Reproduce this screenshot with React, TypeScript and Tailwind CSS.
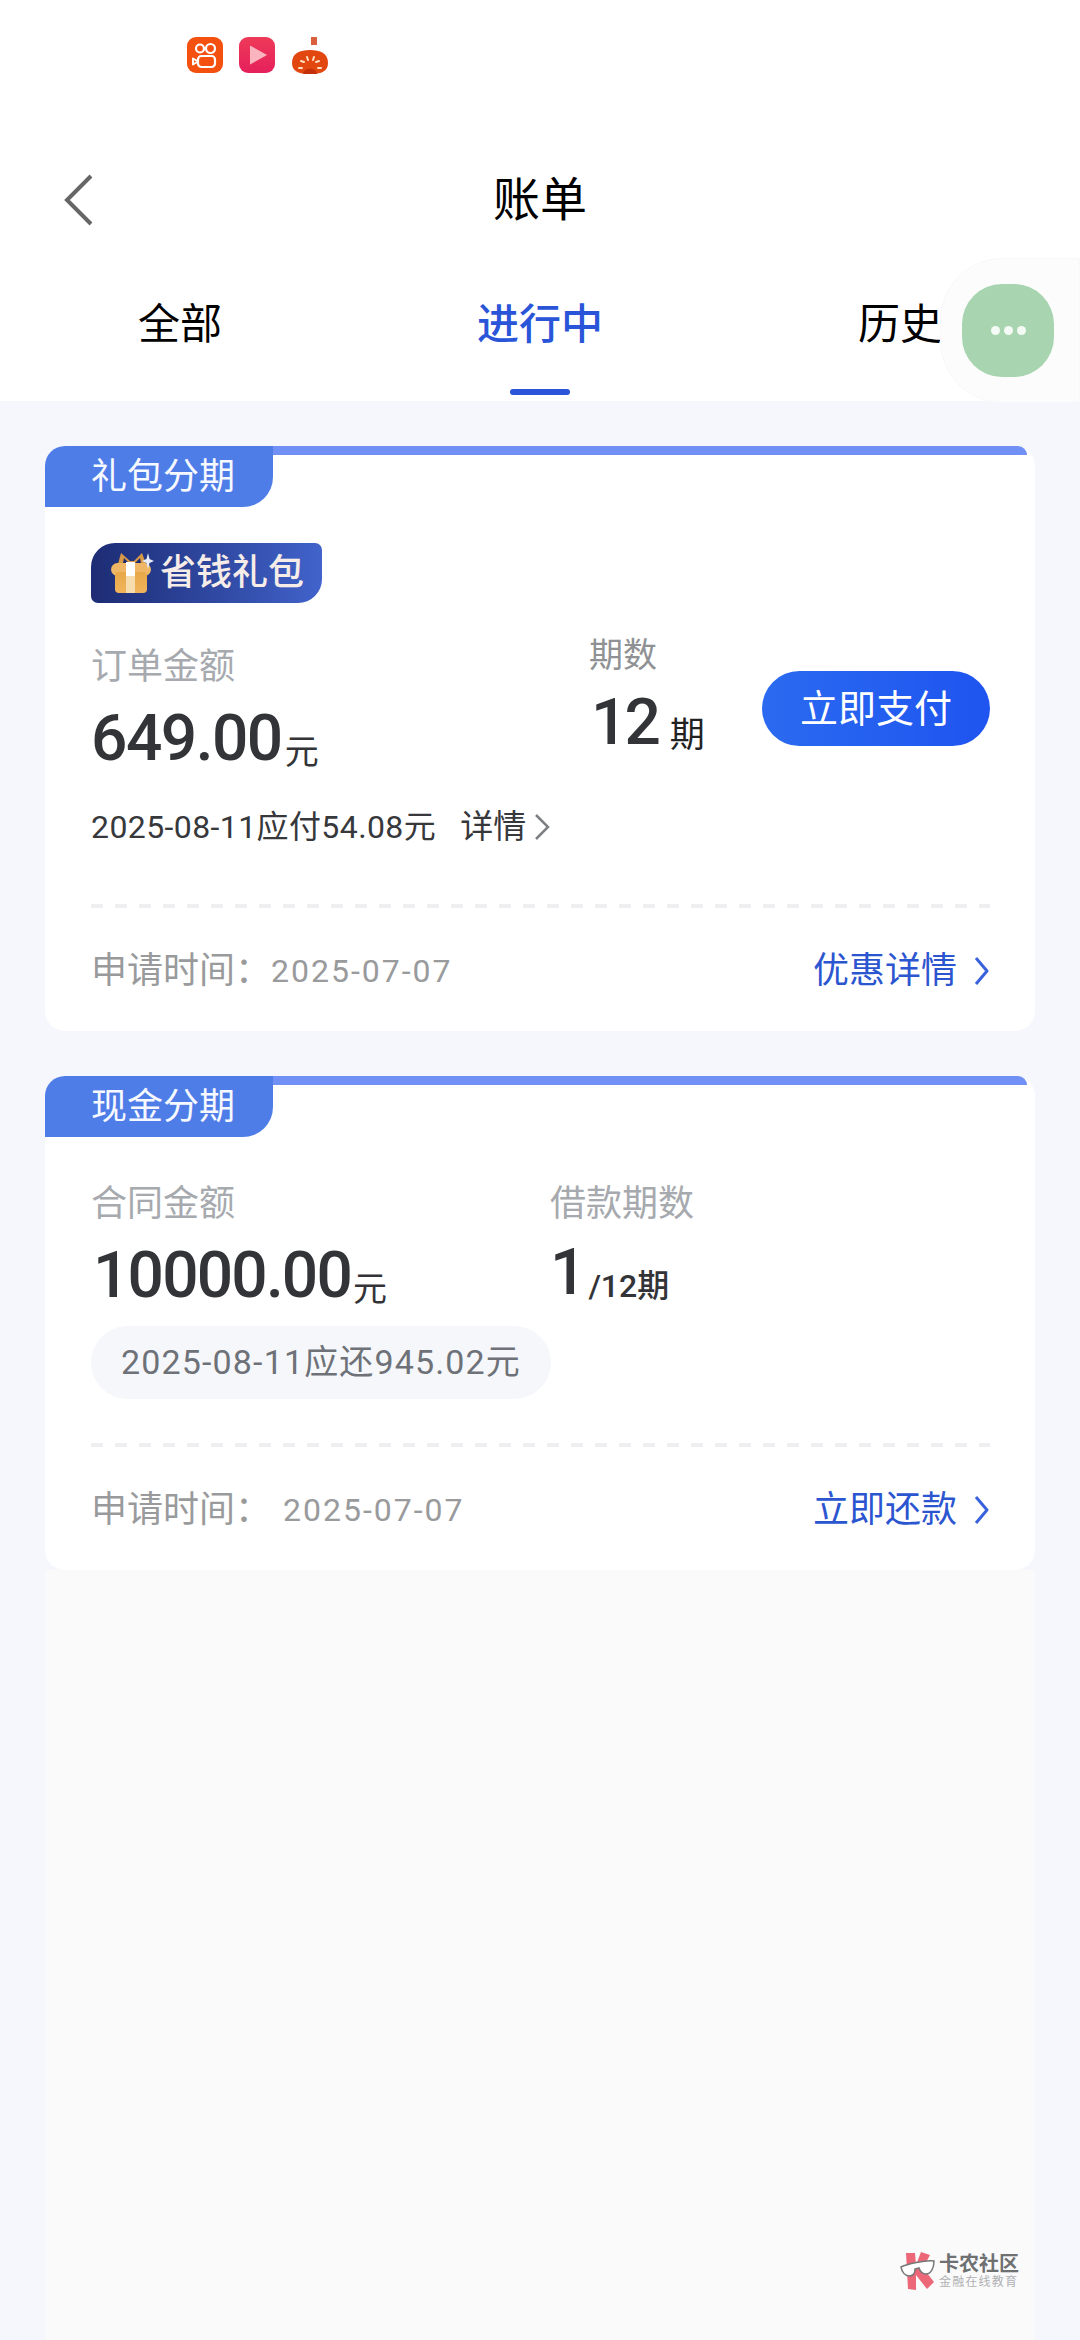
const cjk = "font-['Roboto','Noto_Sans_CJK_SC',sans-serif]";

function StatusIcons() {
  return (
    <div className="flex h-[150px] items-start gap-[16px] pl-[187px] pt-[37px]">
      <svg width="36" height="36" viewBox="0 0 36 36">
        <rect width="36" height="36" rx="9" fill="#f4500f" />
        <circle cx="13" cy="11.5" r="4" fill="none" stroke="#fff" strokeWidth="2.2" />
        <circle cx="23.5" cy="11.5" r="4.5" fill="none" stroke="#fff" strokeWidth="2.2" />
        <rect x="11" y="19" width="17" height="11" rx="3.5" fill="none" stroke="#fff" strokeWidth="2.2" />
        <path d="M11 24.5 6 21.5v6z" fill="none" stroke="#fff" strokeWidth="2" strokeLinejoin="round" />
      </svg>
      <svg width="36" height="36" viewBox="0 0 36 36">
        <defs>
          <linearGradient id="playBg" x1="0" y1="0" x2="0" y2="1">
            <stop offset="0" stopColor="#ee3a58" />
            <stop offset="1" stopColor="#e5205c" />
          </linearGradient>
        </defs>
        <rect width="36" height="36" rx="9" fill="url(#playBg)" />
        <path d="M11 8.5 28 18 11 27.5z" fill="#f9b4c0" />
      </svg>
      <svg width="38" height="38" viewBox="0 0 38 38">
        <rect x="20" y="0" width="6" height="8" fill="#d8603c" />
        <path d="M1 26C1 16 9 13 19 13s18 3 18 13c0 8-6 11-18 11S1 34 1 26z" fill="#e2470f" />
        <path d="M12 37c1-7 13-7 14 0z" fill="#c4300a" />
        <path d="M10 24l3 1M16 20l1 3M23 20l-1 3M28 24l-3 1M8 31h3M27 31h3" stroke="#fde0c0" strokeWidth="2" strokeLinecap="round" />
      </svg>
    </div>
  );
}

function FloatButton() {
  return (
    <div className="absolute right-0 top-[258px] flex h-[145px] w-[140px] items-center rounded-l-[62px] border border-[#f8f8fa] bg-[#fcfcfd] pl-[21px]">
      <div className="flex h-[93px] w-[92px] items-center justify-center gap-[4px] rounded-[40px] bg-[#a8d5b0]">
        <span className="h-[9px] w-[9px] rounded-full bg-[#f4faf5]" />
        <span className="h-[9px] w-[9px] rounded-full bg-[#f4faf5]" />
        <span className="h-[9px] w-[9px] rounded-full bg-[#f4faf5]" />
      </div>
    </div>
  );
}

function GiftIcon() {
  return (
    <svg width="44" height="42" viewBox="0 0 44 42">
      <defs>
        <linearGradient id="giftBox" x1="0" y1="0" x2="0" y2="1">
          <stop offset="0" stopColor="#e8a848" />
          <stop offset="1" stopColor="#f0b45c" />
        </linearGradient>
      </defs>
      <path d="M8 12 11 1l9 8 4 0 8-8 4 11z" fill="#d99a48" />
      <path d="M13 11 14 6l5 5zM31 11l-1-5-5 5z" fill="#1f2d70" />
      <rect x="1" y="11" width="40" height="13" rx="6.5" fill="#eeb665" />
      <rect x="5" y="20" width="32" height="21" rx="4" fill="url(#giftBox)" />
      <rect x="16" y="10" width="9" height="14" fill="#fff" />
      <rect x="16" y="24" width="9" height="17" fill="#f7dcae" />
      <path d="M38 1 39.5 7 44 9 39.5 11 38 17 36.500 11 32 9 36.500 7z" fill="#e8ecfb" />
    </svg>
  );
}

function CardTag({ label }: { label: string }) {
  return (
    <div className="flex items-start">
      <div className="flex h-[61px] w-[228px] items-center rounded-tl-[20px] rounded-br-[30px] bg-[#4f7de8] pl-[46px] text-[36px] leading-none text-[#f6f9ff]">
        {label}
      </div>
      <div className="mr-[8px] h-[9px] flex-1 rounded-tr-[10px] bg-[#7090f5]" />
    </div>
  );
}

function CardFooter({ action, dateGap }: { action: string; dateGap: string }) {
  return (
    <>
      <div className="h-[4px] bg-[repeating-linear-gradient(90deg,#efeff1_0,#efeff1_12px,transparent_12px,transparent_24px)]" />
      <div className="flex h-[123px] items-center justify-between pt-[3px]">
        <div className="flex items-center text-[36px] leading-none text-[#999a9c]">
          <span>申请时间：</span>
          <span className={`${dateGap} text-[32px] tracking-[2px]`}>2025-07-07</span>
        </div>
        <div className="flex items-center text-[36px] leading-none text-[#2c55d0]">
          <span>{action}</span>
          <svg className="ml-[16px]" width="17" height="30" viewBox="0 0 17 30" fill="none">
            <path d="M3 2 14 15 3 28" stroke="#3a62dc" strokeWidth="3" strokeLinejoin="round" />
          </svg>
        </div>
      </div>
    </>
  );
}

function GiftCard() {
  return (
    <div className="rounded-[20px] bg-white">
      <CardTag label="礼包分期" />
      <div className="px-[45px] pl-[46px]">
        <div className="mt-[36px] flex h-[60px] w-[231px] items-center gap-[6px] rounded-tl-[24px] rounded-tr-[7px] rounded-br-[24px] rounded-bl-[7px] bg-linear-to-r from-[#1d2c74] to-[#4163cb] pl-[19px] text-[36px] font-medium leading-none text-[#f6ece8]">
          <GiftIcon />
          <span>省钱礼包</span>
        </div>
        <div className="mt-[27px] flex items-start">
          <div className="w-[498px] pt-[12px]">
            <div className="h-[50px] text-[36px] leading-[50px] text-[#a6a9ae]">订单金额</div>
            <div className="mt-[12px] flex h-[70px] items-end text-[#333438]">
              <span className="text-[64px] font-medium leading-[70px] tracking-[-1.5px]">649.00</span>
              <span className="mb-[2px] ml-[3px] text-[34px] leading-[40px]">元</span>
            </div>
          </div>
          <div className="w-[173px]">
            <div className="h-[50px] text-[34px] leading-[50px] text-[#8f9194]">期数</div>
            <div className="mt-[8px] flex h-[70px] items-end text-[#333438]">
              <span className="ml-[2px] text-[64px] font-medium leading-[70px] tracking-[-3px]">12</span>
              <span className="mb-[2px] ml-[12px] text-[35px] leading-[40px] text-[#222]">期</span>
            </div>
          </div>
          <div className="mt-[41px] flex h-[75px] w-[228px] items-center justify-center rounded-full bg-linear-to-r from-[#2b6af0] to-[#1f54f0] text-[38px] leading-none text-white">
            立即支付
          </div>
        </div>
        <div className="mt-[28px] flex h-[50px] items-center text-[#37383b]">
          <span className="text-[32px] tracking-[0.4px]">2025-08-11应付54.08元</span>
          <span className="ml-[24px] text-[33px]">详情</span>
          <svg className="ml-[8px]" width="16" height="28" viewBox="0 0 16 28" fill="none">
            <path d="M2 2 14 14 2 26" stroke="#7d7f82" strokeWidth="2.500" />
          </svg>
        </div>
        <div className="mt-[52px]">
          <CardFooter action="优惠详情" dateGap="" />
        </div>
      </div>
    </div>
  );
}

function CashCard() {
  return (
    <div className="mt-[45px] rounded-[20px] bg-white">
      <CardTag label="现金分期" />
      <div className="px-[45px] pl-[46px]">
        <div className="mt-[42px] flex items-start">
          <div className="w-[459px]">
            <div className="h-[50px] text-[36px] leading-[50px] text-[#a6a9ae]">合同金额</div>
            <div className="mt-[12px] flex h-[70px] items-end text-[#333438]">
              <span className="ml-[2px] text-[64px] font-medium leading-[70px] tracking-[-1.8px]">10000.00</span>
              <span className="mb-[2px] ml-[2px] text-[34px] leading-[40px]">元</span>
            </div>
          </div>
          <div>
            <div className="h-[50px] text-[36px] leading-[50px] text-[#a6a9ae]">借款期数</div>
            <div className="mt-[9px] flex h-[70px] items-end text-[#333438]">
              <span className="text-[64px] font-medium leading-[70px]">1</span>
              <span className="mb-[2px] ml-[2px] text-[32px] font-medium leading-[40px]">/12期</span>
            </div>
          </div>
        </div>
        <div className="mt-[15px] flex h-[73px] w-[460px] items-center justify-center rounded-full bg-[#f5f7fb] text-[34px] tracking-[1.15px] text-[#6e7278]">
          2025-08-11应还945.02元
        </div>
        <div className="mt-[44px]">
          <CardFooter action="立即还款" dateGap="ml-[12px]" />
        </div>
      </div>
    </div>
  );
}

function Watermark() {
  return (
    <div className="absolute left-[900px] top-[2252px] flex items-center gap-[3px]">
      <svg width="36" height="38" viewBox="0 0 36 38">
        <path d="M6 1h9l1 12 5-13 9 3-7 13 11 14-7 7-11-14 0 15-8-1z" fill="#ec6878" />
        <path d="M1 15c6-3 24-7 33-6 0 7-3 13-8 13-4 0-6-3-7-6l-4 1c0 4-2 7-6 7-4 0-7-4-8-9z" fill="#fff" stroke="#777" strokeWidth="1.500" />
      </svg>
      <div className="flex flex-col">
        <span className="text-[20px] font-bold leading-[22px] text-[#6f7072]">卡农社区</span>
        <span className="text-[12px] leading-[14px] tracking-[1.2px] text-[#b0b1b3]">金融在线教育</span>
      </div>
    </div>
  );
}

export default function App() {
  return (
    <div className={`${cjk} relative flex h-[2340px] w-[1080px] flex-col overflow-hidden bg-[#f5f7fc]`}>
      <div className="h-[401px] shrink-0 bg-white">
        <StatusIcons />
        <div className="relative flex h-[98px] items-center justify-center text-[47px] leading-none text-black">
          <svg className="absolute left-[63px] top-[24px]" width="32" height="52" viewBox="0 0 32 52" fill="none">
            <path d="M28 2 4 26l24 24" stroke="#666" strokeWidth="4" />
          </svg>
          账单
        </div>
        <div className="flex h-[153px] text-[42px] leading-none text-black">
          <div className="flex w-[360px] justify-center pt-[56px]">全部</div>
          <div className="flex w-[360px] flex-col items-center pt-[56px] font-medium text-[#2a55d8]">
            进行中
            <div className="mt-[43px] h-[6px] w-[60px] rounded-full bg-[#2a55d8]" />
          </div>
          <div className="flex w-[360px] justify-center pt-[56px]">历史</div>
        </div>
      </div>
      <FloatButton />
      <div className="flex flex-1 flex-col px-[45px] pt-[45px]">
        <GiftCard />
        <CashCard />
        <div className="flex-1 bg-[#fafafb]" />
      </div>
      <Watermark />
    </div>
  );
}
